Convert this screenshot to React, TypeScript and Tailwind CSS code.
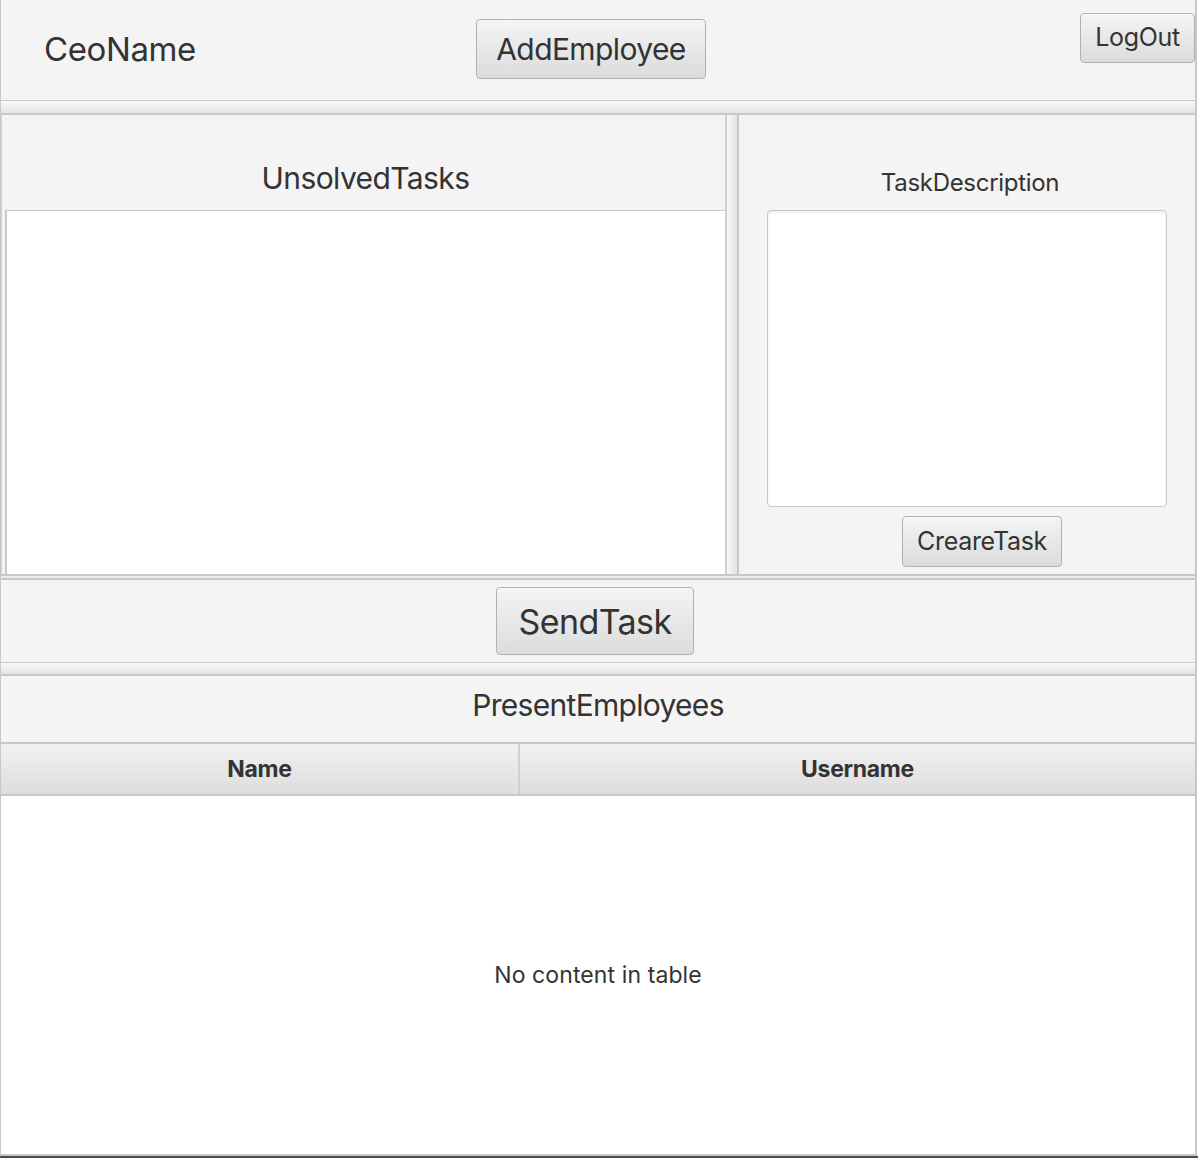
import React from 'react';

// fx-style button: light gradient, thin grey border
function FxButton({ label, className }: { label: string; className: string }) {
  return (
    <button
      className={
        'flex items-center justify-center rounded-[4px] border border-[#b0b0b0] bg-linear-to-b from-[#f4f4f4] to-[#dcdcdc] text-[#333333] shadow-[inset_0_1px_0_#fafafa] ' +
        className
      }
    >
      {label}
    </button>
  );
}

export default function App() {
  return (
    <div className="flex h-[1158px] w-[1198px] flex-col bg-white font-['Inter','Liberation_Sans',sans-serif] text-[#333333]">
      <div className="flex w-[1197px] flex-1 flex-col border-r-2 border-l border-[#c8c8c8] bg-[#f4f4f4]">
        {/* header */}
        <div className="flex h-[101px] border-b border-[#c8c8c8]">
          <div className="flex w-[475px] items-center pl-[43px] text-[33px] tracking-[-0.4px]">CeoName</div>
          <FxButton label="AddEmployee" className="mt-[19px] h-[60px] w-[230px] text-[30px] tracking-[-0.6px]" />
          <div className="flex-1" />
          <FxButton label="LogOut" className="mt-[13px] h-[50px] w-[115px] text-[25px] tracking-[-0.3px]" />
        </div>
        <div className="h-[12px] bg-linear-to-b from-[#f9f9f9] to-[#e3e3e3]" />

        {/* tasks split */}
        <div className="flex h-[463px] border-t-2 border-b-2 border-[#c8c8c8]">
          <div className="flex w-[726px] flex-col border-r-2 border-l border-[#cfcfcf]">
            <div className="flex h-[95px] items-center justify-center pt-[32px] pl-[4px] text-[30px] tracking-[-0.6px]">
              UnsolvedTasks
            </div>
            <div className="ml-[3px] flex-1 border-t border-l-2 border-[#c8c8c8] bg-white" />
          </div>
          <div className="w-[10px] bg-linear-to-r from-[#f8f8f8] to-[#e2e2e2]" />
          <div className="flex flex-1 flex-col border-l-2 border-[#c8c8c8] px-[28px]">
            <div className="mt-[52px] mb-[11px] pl-[6px] text-center text-[24px] leading-[32px] tracking-[-0.3px]">
              TaskDescription
            </div>
            <div className="h-[297px] rounded-[4px] border border-[#c8c8c8] bg-white shadow-[inset_0_2px_3px_rgba(0,0,0,0.07)]" />
            <FxButton label="CreareTask" className="mt-[9px] ml-[135px] h-[51px] w-[160px] text-[25px] tracking-[-0.3px]" />
          </div>
        </div>
        <div className="h-[2px] bg-[#ececec]" />

        {/* send */}
        <div className="flex h-[85px] items-center justify-center border-t-2 border-b border-[#c8c8c8] pr-[6px]">
          <FxButton label="SendTask" className="h-[68px] w-[198px] text-[34px] tracking-[-0.6px]" />
        </div>
        <div className="h-[11px] bg-linear-to-b from-[#f9f9f9] to-[#e3e3e3]" />

        {/* employees */}
        <div className="flex flex-1 flex-col border-t-2 border-[#c8c8c8]">
          <div className="flex h-[68px] items-center justify-center border-b-2 border-[#c8c8c8] pb-[8px] text-[30px] tracking-[-0.7px]">
            PresentEmployees
          </div>
          <div className="flex h-[52px] border-b-2 border-[#c8c8c8] bg-linear-to-b from-[#f1f1f1] to-[#dddddd] text-[23px] font-bold tracking-[-0.3px]">
            <div className="flex w-[519px] items-center justify-center border-r-2 border-[#cfcfcf]">Name</div>
            <div className="flex flex-1 items-center justify-center">Username</div>
          </div>
          <div className="flex flex-1 items-center justify-center bg-white text-[23px] tracking-[0.1px]">
            No content in table
          </div>
        </div>
      </div>
      <div className="h-[2px] w-[1197px] bg-[#c8c8c8]" />
      <div className="h-[2px] bg-[#4c4c4c]" />
    </div>
  );
}
